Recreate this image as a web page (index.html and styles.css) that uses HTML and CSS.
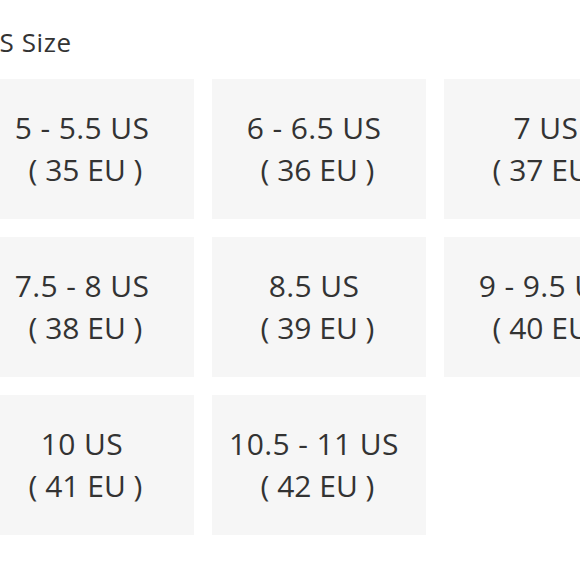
FILE: index.html
```html
<!DOCTYPE html>
<html>
<head>
<meta charset="utf-8">
<link rel="stylesheet" href="styles.css">
</head>
<body>
<div class="page">
  <h2 class="title">US Size</h2>
  <div class="grid">
    <div class="tile"><span class="us">5 - 5.5 US</span><span class="eu">( 35 EU )</span></div>
    <div class="tile"><span class="us">6 - 6.5 US</span><span class="eu">( 36 EU )</span></div>
    <div class="tile"><span class="us">7 US</span><span class="eu">( 37 EU )</span></div>
    <div class="tile"><span class="us">7.5 - 8 US</span><span class="eu">( 38 EU )</span></div>
    <div class="tile"><span class="us">8.5 US</span><span class="eu">( 39 EU )</span></div>
    <div class="tile"><span class="us">9 - 9.5 US</span><span class="eu">( 40 EU )</span></div>
    <div class="tile"><span class="us">10 US</span><span class="eu">( 41 EU )</span></div>
    <div class="tile"><span class="us">10.5 - 11 US</span><span class="eu">( 42 EU )</span></div>
  </div>
</div>
</body>
</html>
```
FILE: styles.css
```css
html, body {
  margin: 0;
  padding: 0;
  background: #ffffff;
  overflow: hidden;
}
body {
  font-family: "Open Sans", "Liberation Sans", sans-serif;
  color: #333333;
}
.page {
  margin-left: -20px;
  width: 680px;
}
.title {
  margin: 0;
  padding-top: 24px;
  font-size: 26px;
  font-weight: 400;
  line-height: 36px;
  letter-spacing: 0.6px;
  color: #333333;
}
.grid {
  margin-top: 19px;
  display: grid;
  grid-template-columns: repeat(3, 214px);
  grid-auto-rows: 140px;
  gap: 18px;
}
.tile {
  background: #f6f6f6;
  display: flex;
  flex-direction: column;
  align-items: center;
  justify-content: center;
  font-size: 30px;
  line-height: 42px;
}
.us {
  padding-right: 10px;
  letter-spacing: 0.4px;
}
.eu {
  padding-right: 3px;
}
```
